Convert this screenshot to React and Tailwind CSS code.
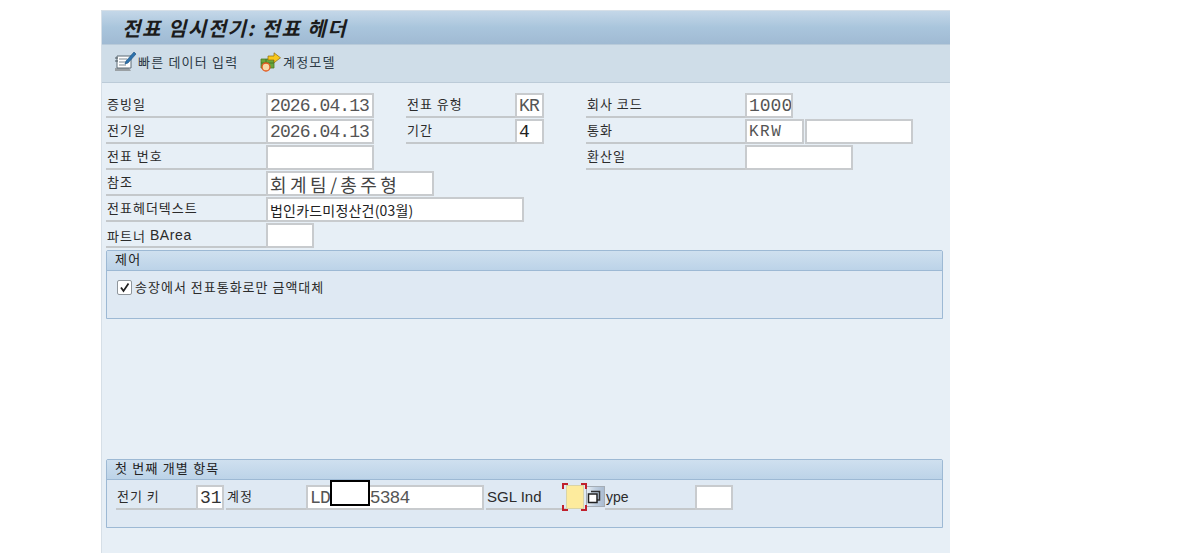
const kr = "font-['Noto_Sans_CJK_KR','Liberation_Sans',sans-serif]";
const sans = "font-['Liberation_Sans','Noto_Sans_CJK_KR',sans-serif]";
const mono = "font-['Liberation_Mono','Noto_Sans_CJK_KR',monospace]";
const labelText = `text-[13px] tracking-[1px] ${kr}`;
const monoText = `text-[18px] tracking-[-0.9px] text-[#555] ${mono}`;

function Label({ w, children, type = labelText, className = "" }) {
  return (
    <div className={`h-[25px] flex items-center border-b-2 border-[#c4c8cb] pl-px pb-[2px] text-[#2b2b2b] shrink-0 ${type} ${className}`} style={{ width: w }}>
      {children}
    </div>
  );
}

function Field({ w, children, type = monoText, className = "" }) {
  return (
    <div className={`h-[25px] shrink-0 bg-white border-2 border-[#c8cbce] flex items-center pl-[2px] whitespace-nowrap overflow-hidden leading-none ${type} ${className}`} style={{ width: w }}>
      {children}
    </div>
  );
}

function Row({ children }) {
  return <div className="h-[26px] flex items-start">{children}</div>;
}

function GroupBox({ title, className = "", children }) {
  return (
    <div className={`mx-[4px] w-[837px] border border-[#9db9d4] rounded-t-[2px] bg-[#dfe9f3] flex flex-col ${className}`}>
      <div className={`h-[20px] shrink-0 bg-gradient-to-b from-[#cfe0ef] to-[#bcd3e8] border-b border-[#9db9d4] pl-[8px] pb-[3px] flex items-center text-[13px] tracking-[1.2px] text-[#222] ${kr}`}>
        {title}
      </div>
      {children}
    </div>
  );
}

function QuickIcon() {
  return (
    <svg width="23" height="21" viewBox="0 0 23 21" className="shrink-0">
      <path d="M1 17h14l2 3H1z" fill="#9aa0a4" />
      <path d="M3 5h14v12H3z" fill="#fff" stroke="#5d6b74" strokeWidth="1" />
      <path d="M5 8h8M5 11h8M5 14h7" stroke="#7d8a94" strokeWidth="1" />
      <path d="M20 1l2 2-8 9-3 1 1-3z" fill="#2c72ad" stroke="#1d4f7c" strokeWidth="0.6" />
      <path d="M1 7h3M1 10h3" stroke="#48545c" strokeWidth="1" />
    </svg>
  );
}

function ModelIcon() {
  return (
    <svg width="22" height="20" viewBox="0 0 22 20" className="shrink-0">
      <path d="M1 7h13v9H1z" fill="#6aa63c" stroke="#4b7b29" strokeWidth="0.8" />
      <path d="M1 11h13M6 7v9" stroke="#3f6d22" strokeWidth="0.8" />
      <circle cx="6" cy="15" r="4" fill="#f7d9a7" stroke="#e2571d" strokeWidth="1.3" />
      <path d="M8 4h6V0.8l6.5 5-6.5 5V8H8z" fill="#f8c71c" stroke="#8a6a10" strokeWidth="0.7" />
    </svg>
  );
}

function TitleBar() {
  return (
    <div className="h-[34px] shrink-0 bg-gradient-to-b from-[#c4d7e8] via-[#a9c5dc] to-[#a0bad3] border-b border-[#b9cbda] pl-[20px] flex items-center">
      <span className={`text-[20px] font-bold italic tracking-[1.5px] text-[#1c1c1c] ${kr}`}>전표 임시전기: 전표 헤더</span>
    </div>
  );
}

function Toolbar() {
  return (
    <div className={`h-[38px] shrink-0 bg-[#cfdde8] border-b border-[#bccbd8] flex items-center pl-[12px] pb-[4px] text-[13px] tracking-[1.2px] text-[#2d3a45] ${kr}`}>
      <QuickIcon />
      <span className="ml-px w-[122px]">빠른 데이터 입력</span>
      <ModelIcon />
      <span className="ml-px">계정모델</span>
    </div>
  );
}

function HeaderForm() {
  return (
    <div className="pt-[10px] pl-[4px] flex flex-col">
      <Row>
        <Label w={160}>증빙일</Label>
        <Field w={108}>2026.04.13</Field>
        <div className="w-[32px]" />
        <Label w={109}>전표 유형</Label>
        <Field w={29} className="pl-[1px]">KR</Field>
        <div className="w-[42px]" />
        <Label w={159}>회사 코드</Label>
        <Field w={48} type={`text-[18px] text-[#555] ${mono}`}>1000</Field>
      </Row>
      <Row>
        <Label w={160}>전기일</Label>
        <Field w={108}>2026.04.13</Field>
        <div className="w-[32px]" />
        <Label w={109}>기간</Label>
        <Field w={29} type={`text-[18px] text-[#222] ${mono}`}>4</Field>
        <div className="w-[42px]" />
        <Label w={159}>통화</Label>
        <Field w={59} type={`text-[16px] tracking-[1.5px] text-[#555] ${mono}`}>KRW</Field>
        <Field w={108} className="ml-px" />
      </Row>
      <Row>
        <Label w={160}>전표 번호</Label>
        <Field w={108} />
        <div className="w-[212px]" />
        <Label w={159}>환산일</Label>
        <Field w={108} />
      </Row>
      <Row>
        <Label w={160}>참조</Label>
        <Field w={168} type={`text-[18px] tracking-[3.4px] text-[#444] ${kr}`}>회계팀/총주형</Field>
      </Row>
      <Row>
        <Label w={160} className="pt-px">전표헤더텍스트</Label>
        <Field w={258} type={`text-[14px] tracking-[0.2px] text-[#222] ${kr}`}>법인카드미정산건(03월)</Field>
      </Row>
      <Row>
        <Label w={160} className="pt-[4px]">파트너 <span className={`ml-[4px] text-[14px] tracking-[0.6px] ${sans}`}>BArea</span></Label>
        <Field w={48} />
      </Row>
    </div>
  );
}

function ControlGroup() {
  return (
    <GroupBox title="제어" className="h-[69px] mt-px">
      <div className={`flex items-center pl-[10px] pt-[8px] text-[13px] tracking-[1px] text-[#2b2b2b] ${kr}`}>
        <div className="w-[15px] h-[15px] bg-white border border-[#8f969c] rounded-[2px] flex items-center justify-center">
          <svg width="11" height="11" viewBox="0 0 11 11">
            <path d="M2 5.5l2.5 3.5L9.5 1.5" fill="none" stroke="#222" strokeWidth="1.8" />
          </svg>
        </div>
        <span className="ml-[3px] -mt-[2px]">송장에서 전표통화로만 금액대체</span>
      </div>
    </GroupBox>
  );
}

const corner = "absolute w-[6px] h-[6px] border-[#c0202c]";

function FirstItemGroup() {
  return (
    <GroupBox title="첫 번째 개별 항목" className="h-[69px] mt-[140px]">
      <div className="flex items-start pl-[9px] pt-[5px]">
        <Label w={80} className="pl-[2px]">전기 키</Label>
        <Field w={28} type={`text-[18px] text-[#333] ${mono}`}>31</Field>
        <Label w={80} className="ml-[2px]">계정</Label>
        <div className="relative">
          <Field w={178}>
            <span>LD</span>
            <span className="ml-[40px]">5384</span>
          </Field>
          <div className="absolute left-[24px] top-[-5px] w-[40px] h-[26px] bg-white border-2 border-black" />
        </div>
        <Label w={80} type={`text-[15px] ${sans}`} className="ml-[2px] pt-[3px]">SGL Ind</Label>
        <div className="relative w-[18px] h-[24px] bg-[#fdeb9d] border border-[#d9d4a8] shrink-0">
          <div className={`${corner} -left-[5px] -top-[3px] border-l-2 border-t-2`} />
          <div className={`${corner} -right-[4px] -top-[3px] border-r-2 border-t-2`} />
          <div className={`${corner} -left-[5px] -bottom-[3px] border-l-2 border-b-2`} />
          <div className={`${corner} -right-[4px] -bottom-[3px] border-r-2 border-b-2`} />
        </div>
        <div className="w-[19px] h-[21px] ml-[2px] mt-px shrink-0 bg-gradient-to-r from-[#e6edf3] via-[#c0cfe0] to-[#aabbd0] border border-[#a5adb5] flex items-center justify-start">
          <svg width="14" height="14" viewBox="0 0 14 14">
            <path d="M4 1.5h8.5v8.5H10" fill="none" stroke="#333" strokeWidth="1.5" />
            <path d="M1.5 4h8.5v8.5H1.5z" fill="#fff" stroke="#222" strokeWidth="1.5" />
          </svg>
        </div>
        <Label w={90} type={`text-[14px] ${sans}`} className="pt-[3px]">ype</Label>
        <Field w={38} />
      </div>
    </GroupBox>
  );
}

export default function App() {
  return (
    <div className="w-[1191px] h-[560px] bg-white overflow-hidden pt-[10px]">
      <div className="ml-[101px] w-[849px] h-[543px] bg-[#e7eff6] border-t border-l border-[#d6dfe7] flex flex-col">
        <TitleBar />
        <Toolbar />
        <HeaderForm />
        <ControlGroup />
        <FirstItemGroup />
      </div>
    </div>
  );
}
